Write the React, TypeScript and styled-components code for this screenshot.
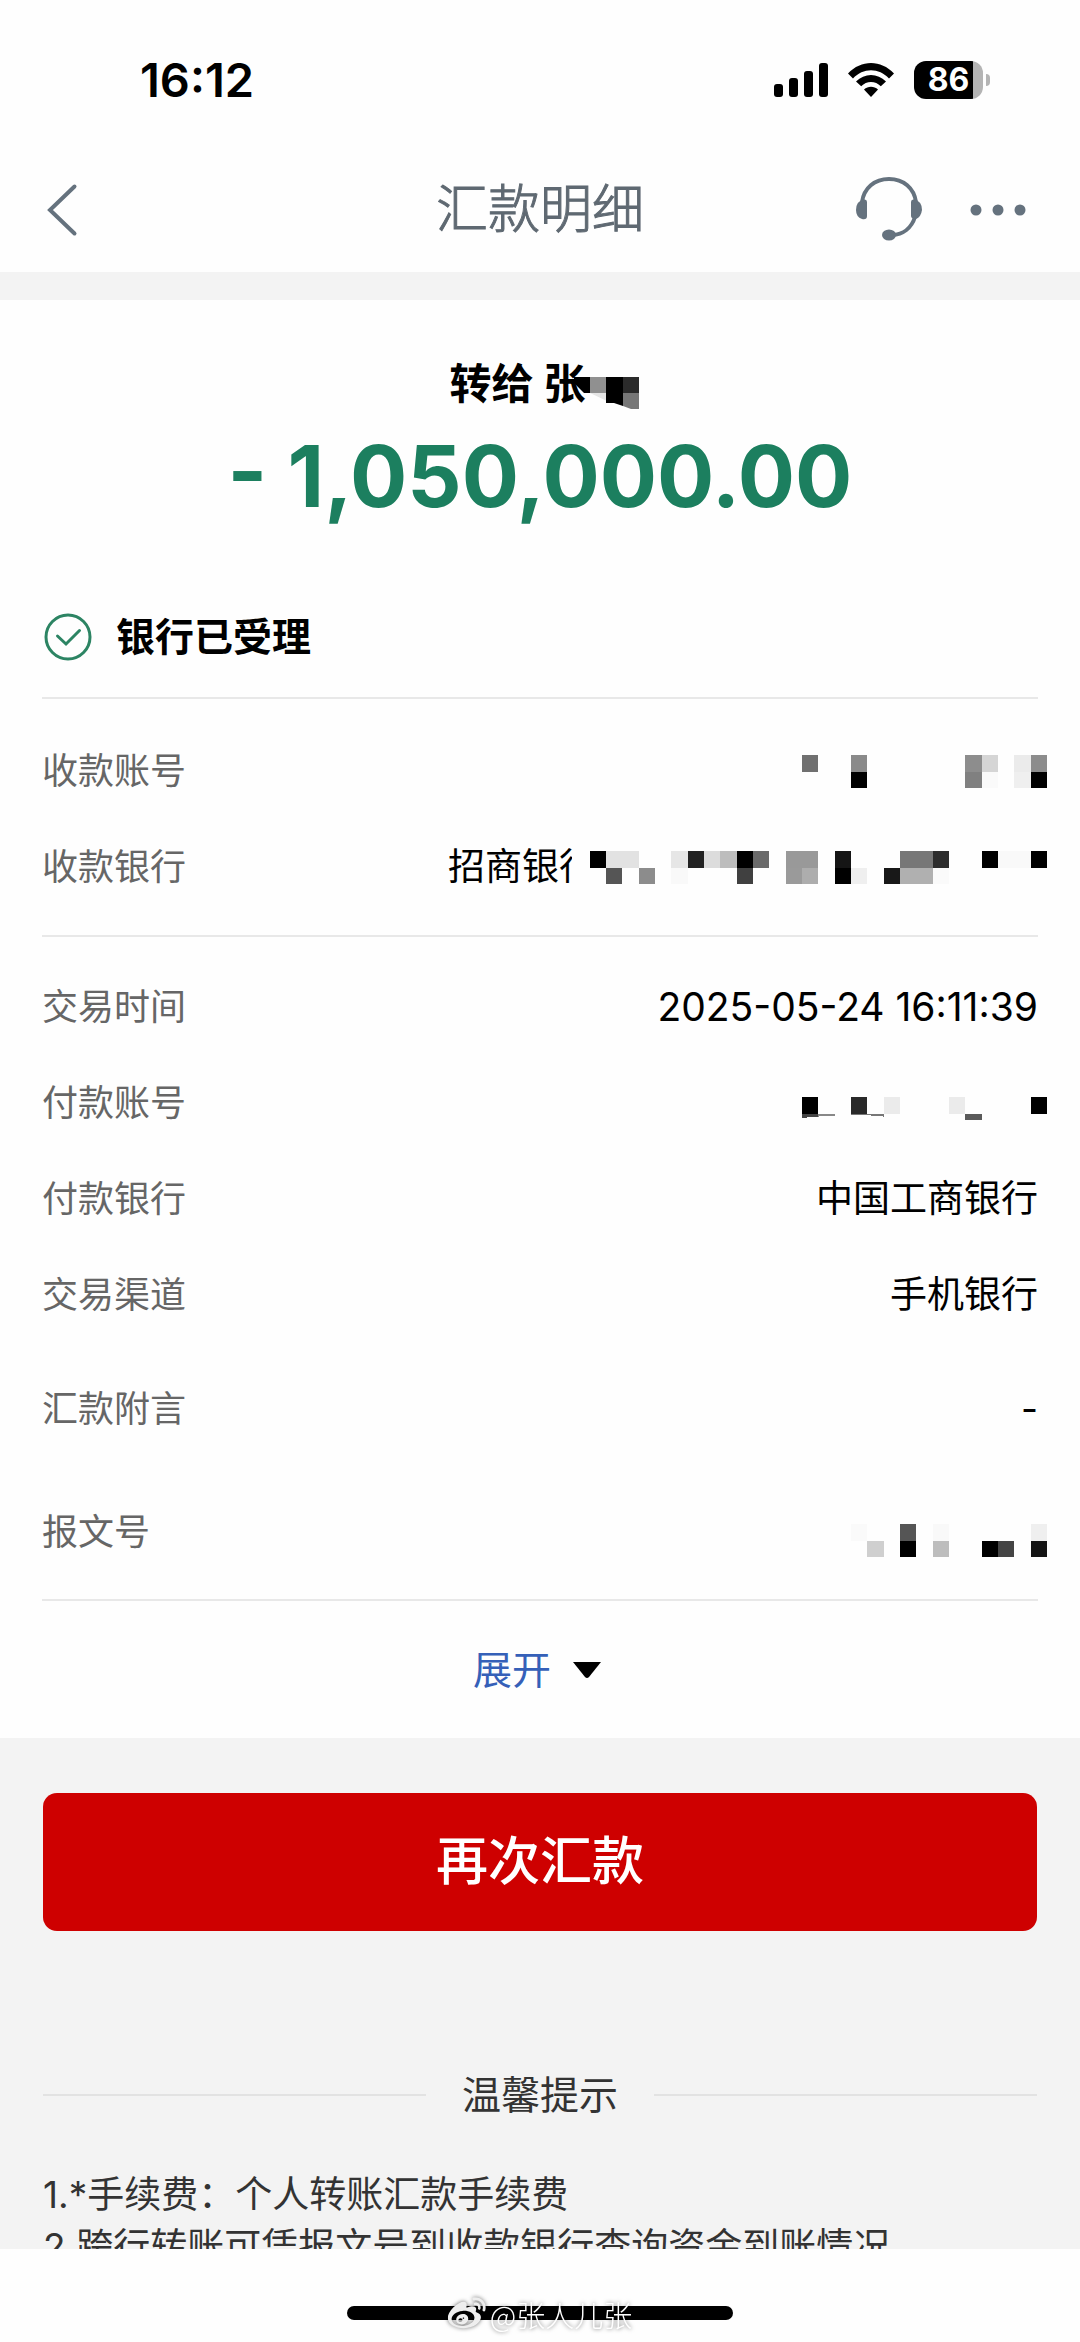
import React from "react";
import styled, { createGlobalStyle } from "styled-components";
import { FaWeibo } from "react-icons/fa";

const GlobalStyle = createGlobalStyle`
  *, *::before, *::after { box-sizing: border-box; }
  body {
    margin: 0;
    background: #fefefe;
    color: #000;
    font-family: Inter, "Noto Sans CJK SC", sans-serif;
  }
  button { font-family: inherit; border: 0; padding: 0; background: none; cursor: pointer; }
  svg { display: block; flex: none; }
  h1, h2, p, dl, dd, dt, ol { margin: 0; padding: 0; }
`;

const Page = styled.div`
  display: flex;
  flex-direction: column;
  height: 100vh;
`;

const StatusBar = styled.header`
  display: flex;
  align-items: center;
  justify-content: space-between;
  height: 148px;
  padding: 12px 90px 0 140px;
`;

const Clock = styled.span`
  font-size: 47px;
  font-weight: 600;
  line-height: 56px;
`;

const StatusIcons = styled.div`
  display: flex;
  align-items: center;
  gap: 20px;
`;

const Battery = styled.div`
  display: flex;
  align-items: center;
  gap: 3px;
`;

const BatteryBody = styled.span`
  width: 69px;
  height: 38px;
  border-radius: 12px;
  background: linear-gradient(to right, #000 86%, #b4b4b4 86%);
  color: #fff;
  font-size: 32px;
  font-weight: 700;
  line-height: 38px;
  text-align: center;
`;

const BatteryTip = styled.span`
  width: 4px;
  height: 12px;
  border-radius: 0 6px 6px 0;
  background: #b4b4b4;
`;

const NavBar = styled.nav`
  display: grid;
  grid-template-columns: 1fr auto 1fr;
  align-items: center;
  height: 124px;
  padding: 0 46px;
  color: #65727e;
`;

const NavTitle = styled.h1`
  font-size: 52px;
  font-weight: 300;
  line-height: 64px;
  color: #5f6972;
  -webkit-text-stroke: 1px currentColor;
`;

const NavActions = styled.div`
  display: flex;
  align-items: center;
  justify-content: flex-end;
  gap: 48px;
  padding-right: 8px;
`;

const IconButton = styled.button`
  display: flex;
  justify-self: start;
  color: inherit;
`;

const Content = styled.main`
  flex: 1;
  min-height: 0;
  overflow: hidden;
  padding-top: 28px;
  background: #f3f3f3;
`;

const Sheet = styled.section`
  padding: 60px 42px 0;
  background: #fefefe;
`;

const Payee = styled.p`
  display: flex;
  justify-content: center;
  font-size: 42px;
  font-weight: 700;
  line-height: 48px;
`;

const Amount = styled.p`
  margin-top: 20px;
  font-size: 85px;
  font-weight: 700;
  line-height: 96px;
  color: #1c7f5f;
  text-align: center;
`;

const Status = styled.div`
  display: flex;
  align-items: center;
  gap: 24px;
  margin-top: 88px;
  padding: 0 0 36px 2px;
  font-size: 39px;
  font-weight: 700;
  line-height: 48px;
`;

const Group = styled.dl<{ $top: number; $bottom: number }>`
  padding: ${(p) => p.$top}px 0 ${(p) => p.$bottom}px;
  border-top: 2px solid #e8e8e8;
`;

const Row = styled.div<{ $height?: number }>`
  display: flex;
  align-items: center;
  justify-content: space-between;
  height: ${(p) => p.$height ?? 96}px;
  line-height: 48px;
`;

const Label = styled.dt`
  color: #666;
  font-size: 36px;
`;

const Value = styled.dd<{ $numeric?: boolean }>`
  display: flex;
  align-items: center;
  font-size: ${(p) => (p.$numeric ? 39 : 37)}px;
`;

const CutText = styled.span`
  width: 124px;
  overflow: hidden;
  white-space: nowrap;
`;

const MosaicSvg = styled.svg<{ $top?: number; $left: number; $right: number }>`
  margin-top: ${(p) => p.$top ?? 0}px;
  margin-left: ${(p) => p.$left}px;
  margin-right: ${(p) => p.$right}px;
`;

const ExpandBar = styled.div`
  display: flex;
  justify-content: center;
  height: 139px;
  border-top: 2px solid #e8e8e8;
`;

const ExpandButton = styled.button`
  display: flex;
  align-items: center;
  gap: 22px;
  padding-right: 6px;
  color: #3560b8;
  font-size: 39px;
  line-height: 48px;
`;

const Below = styled.section`
  padding: 55px 43px 0;
`;

const PrimaryButton = styled.button`
  display: block;
  width: 100%;
  height: 138px;
  border-radius: 14px;
  background: #ce0000;
  color: #fff;
  font-size: 52px;
  font-weight: 500;
  line-height: 64px;
`;

const TipsTitle = styled.h2`
  display: flex;
  align-items: center;
  gap: 36px;
  margin: 136px 0 46px;
  color: #333;
  font-size: 39px;
  font-weight: 400;
  line-height: 56px;

  &::before,
  &::after {
    content: "";
    flex: 1;
    height: 2px;
    background: #e2e2e2;
  }
`;

const Tips = styled.ol`
  list-style: none;
  color: #333;
  font-size: 37px;
  line-height: 52px;
`;

const Footer = styled.footer`
  position: relative;
  display: flex;
  justify-content: center;
  height: 93px;
  padding-top: 57px;
`;

const HomeIndicator = styled.div`
  width: 386px;
  height: 14px;
  border-radius: 7px;
  background: #000;
`;

const Watermark = styled.div`
  position: absolute;
  top: 46px;
  left: 50%;
  display: flex;
  align-items: center;
  gap: 4px;
  transform: translateX(-50%);
  color: #fff;
  font-family: "Noto Sans CJK SC", sans-serif;
  font-size: 29px;
  font-weight: 300;
  line-height: 38px;
  white-space: nowrap;
  filter: drop-shadow(0 0 2px rgba(0, 0, 0, 0.6));
`;

// Each cell: columns from the right edge, row, grey value
type Cell = [number, number, string];

type MosaicProps = {
  cols: number;
  cells: Cell[];
  top?: number;
  left?: number;
  children?: React.ReactNode;
};

// A cell is a 49-unit square in a view box three times the drawn size.
function Mosaic({ cols, cells, top = 0, left = 0, children }: MosaicProps) {
  return (
    <MosaicSvg
      $top={top}
      $left={left}
      $right={-9}
      width={Math.round((cols * 49) / 3)}
      height={33}
      viewBox={`0 0 ${cols * 49} 98`}
      preserveAspectRatio="none"
      shapeRendering="crispEdges"
      aria-hidden="true"
    >
      {cells.map(([fromRight, row, fill]) => (
        <rect
          key={`${fromRight}-${row}`}
          x={(cols - 1 - fromRight) * 49}
          y={row * 49}
          width={49}
          height={49}
          fill={fill}
        />
      ))}
      {children}
    </MosaicSvg>
  );
}

const payeeAccount: Cell[] = [
  [0, 0, "#8c8c8c"], [0, 1, "#000"], [1, 0, "#ebebeb"], [1, 1, "#efefef"],
  [3, 0, "#d5d5d5"], [3, 1, "#fafafa"], [4, 0, "#8d8d8d"], [4, 1, "#808080"],
  [11, 0, "#8a8a8a"], [11, 1, "#000"], [14, 0, "#707070"],
];

const payeeBank: Cell[] = [
  [0, 0, "#000"], [1, 0, "#f9f9f9"], [2, 0, "#f9f9f9"], [3, 0, "#000"],
  [6, 0, "#2d2d2d"], [6, 1, "#fafafa"], [7, 0, "#777"], [7, 1, "#b0b0b0"],
  [8, 0, "#777"], [8, 1, "#b0b0b0"], [9, 1, "#181818"], [11, 1, "#efefef"],
  [12, 0, "#151515"], [12, 1, "#000"], [14, 0, "#999"], [14, 1, "#adadad"],
  [15, 0, "#999"], [15, 1, "#9a9a9a"], [17, 0, "#6a6a6a"], [18, 0, "#000"],
  [18, 1, "#404040"], [19, 0, "#bdbdbd"], [20, 0, "#dcdcdc"], [21, 0, "#222"],
  [22, 0, "#e6e6e6"], [22, 1, "#f9f9f9"], [24, 1, "#8c8c8c"], [25, 0, "#e2e2e2"],
  [26, 0, "#e2e2e2"], [26, 1, "#555"], [27, 0, "#000"],
];

const payerAccount: Cell[] = [
  [0, 0, "#000"], [5, 0, "#ebebeb"], [9, 0, "#ebebeb"], [11, 0, "#292929"], [14, 0, "#000"],
];

const messageNumber: Cell[] = [
  [0, 0, "#efefef"], [0, 1, "#141414"], [2, 1, "#444"], [3, 1, "#000"],
  [6, 0, "#f9f9f9"], [6, 1, "#bdbdbd"], [8, 0, "#555"], [8, 1, "#000"],
  [10, 1, "#cfcfcf"], [11, 0, "#fafafa"],
];

function SignalIcon() {
  return (
    <svg width="54" height="34" viewBox="0 0 54 34">
      <rect x="0" y="21" width="9" height="13" rx="3" />
      <rect x="15" y="15" width="9" height="19" rx="3" />
      <rect x="30" y="8" width="9" height="26" rx="3" />
      <rect x="45" y="0" width="9" height="34" rx="3" />
    </svg>
  );
}

function WifiIcon() {
  return (
    <svg width="46" height="34" viewBox="0 0 46 34">
      <path d="M0 10.5C13-3.5 33-3.5 46 10.5L41 15.500C31 4.500 15 4.500 5 15.500Z" />
      <path d="M8 18.500C16.500 9.700 29.500 9.700 38 18.500L32.800 23.300C27.500 17.500 18.500 17.500 13.200 23.300Z" />
      <path d="M16 26.500C20 22.800 26 22.800 30 26.500L23 34Z" />
    </svg>
  );
}

function BackIcon() {
  return (
    <svg width="32" height="54" viewBox="0 0 32 54" fill="none" stroke="currentColor" strokeWidth="4" strokeLinecap="round">
      <path d="M28.500 3.500L4 27L28.500 50.500" />
    </svg>
  );
}

function HeadsetIcon() {
  return (
    <svg width="66" height="66" viewBox="0 0 66 66">
      <path d="M6 25C8 11 18.500 2 33 2S58 11 60 25M59 40C55.500 51 47 57.500 36 58" fill="none" stroke="currentColor" strokeWidth="4" />
      <path d="M11 25Q11 22 8 22.500Q0 24 0 33Q0 40 6 42Q11 43 11 39Z" fill="currentColor" />
      <path d="M55 25Q55 22 58 22.500Q66 24 66 33Q65 40 60 42Q55 42 55 39Z" fill="currentColor" />
      <ellipse cx="33" cy="58" rx="7" ry="5.600" fill="currentColor" />
    </svg>
  );
}

function MoreIcon() {
  return (
    <svg width="56" height="12" viewBox="0 0 56 12" fill="currentColor">
      <circle cx="6" cy="6" r="5.500" />
      <circle cx="28" cy="6" r="5.500" />
      <circle cx="50" cy="6" r="5.500" />
    </svg>
  );
}

function AcceptedIcon() {
  return (
    <svg width="48" height="48" viewBox="0 0 48 48" fill="none" stroke="#2c8463" strokeWidth="3" strokeLinecap="round">
      <circle cx="24" cy="24" r="22" />
      <path d="M13.500 23L22 31L35.500 17.500" />
    </svg>
  );
}

export default function App() {
  return (
    <Page>
      <GlobalStyle />
      <StatusBar>
        <Clock>16:12</Clock>
        <StatusIcons>
          <SignalIcon />
          <WifiIcon />
          <Battery>
            <BatteryBody>86</BatteryBody>
            <BatteryTip />
          </Battery>
        </StatusIcons>
      </StatusBar>
      <NavBar>
        <IconButton type="button" aria-label="返回">
          <BackIcon />
        </IconButton>
        <NavTitle>汇款明细</NavTitle>
        <NavActions>
          <IconButton type="button" aria-label="客服">
            <HeadsetIcon />
          </IconButton>
          <IconButton type="button" aria-label="更多">
            <MoreIcon />
          </IconButton>
        </NavActions>
      </NavBar>
      <Content>
        <Sheet>
          <Payee>
            转给 张
            <MosaicSvg $left={-11} $right={-9} width="65" height="49" viewBox="0 0 65 49" aria-hidden="true">
              <path d="M-6 17H17V33H10Z" fill="#000" />
              <path d="M16 17H33V33H16Z" fill="#909090" />
              <path d="M16 33H33V41Z" fill="#e5e5e5" />
              <path d="M32 17H49V46L40 43H32Z" fill="#000" />
              <path d="M49 17H65V33H49Z" fill="#2b2b2b" />
              <path d="M49 33H65V49H57L49 46Z" fill="#777" />
            </MosaicSvg>
          </Payee>
          <Amount>- 1,050,000.00</Amount>
          <Status>
            <AcceptedIcon />
            银行已受理
          </Status>
          <Group $top={24} $bottom={20}>
            <Row>
              <Label>收款账号</Label>
              <Value>
                <Mosaic cols={15} cells={payeeAccount} />
              </Value>
            </Row>
            <Row>
              <Label>收款银行</Label>
              <Value>
                <CutText>招商银行</CutText>
                <Mosaic cols={30} cells={payeeBank} left={-15} />
              </Value>
            </Row>
          </Group>
          <Group $top={22} $bottom={10}>
            <Row>
              <Label>交易时间</Label>
              <Value $numeric>2025-05-24 16:11:39</Value>
            </Row>
            <Row>
              <Label>付款账号</Label>
              <Value>
                <Mosaic cols={15} cells={payerAccount} top={20}>
                  <path d="M0 49H49V58L0 62Z" fill="#444" />
                  <path d="M49 52L98 49V55L49 58Z" fill="#888" />
                  <path d="M147 49H196L245 51V58L196 54H147Z" fill="#777" />
                  <path d="M490 49H539V69H490Z" fill="#5a5a5a" />
                </Mosaic>
              </Value>
            </Row>
            <Row>
              <Label>付款银行</Label>
              <Value>中国工商银行</Value>
            </Row>
            <Row>
              <Label>交易渠道</Label>
              <Value>手机银行</Value>
            </Row>
            <Row $height={132}>
              <Label>汇款附言</Label>
              <Value>-</Value>
            </Row>
            <Row $height={114}>
              <Label>报文号</Label>
              <Value>
                <Mosaic cols={12} cells={messageNumber} top={16} />
              </Value>
            </Row>
          </Group>
          <ExpandBar>
            <ExpandButton type="button">
              展开
              <svg width="28" height="16" viewBox="0 0 28 16">
                <path d="M0 0H28L16 15Q14 17 12 15Z" fill="#000" />
              </svg>
            </ExpandButton>
          </ExpandBar>
        </Sheet>
        <Below>
          <PrimaryButton type="button">再次汇款</PrimaryButton>
          <TipsTitle>温馨提示</TipsTitle>
          <Tips>
            <li>1.*手续费：个人转账汇款手续费</li>
            <li>2.跨行转账可凭报文号到收款银行查询资金到账情况</li>
          </Tips>
        </Below>
      </Content>
      <Footer>
        <HomeIndicator />
        <Watermark>
          <FaWeibo size={38} color="#eee" />
          @张人儿张
        </Watermark>
      </Footer>
    </Page>
  );
}
